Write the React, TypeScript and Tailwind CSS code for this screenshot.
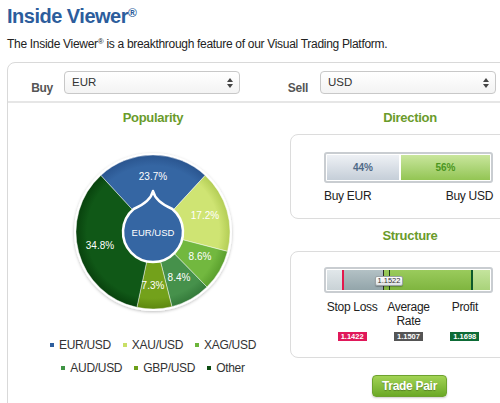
import React from "react"

type Slice = { label: string; pct: number; color: string; dark: string; lx: number; ly: number }

const slices: Slice[] = [
  { label: "EUR/USD", pct: 23.7, color: "#3566a3", dark: "#2a558f", lx: 0, ly: -56 },
  { label: "XAU/USD", pct: 17.2, color: "#cfe473", dark: "#b3cd55", lx: 52, ly: -17 },
  { label: "XAG/USD", pct: 8.6, color: "#72b83f", dark: "#5a9f2d", lx: 47, ly: 24 },
  { label: "AUD/USD", pct: 8.4, color: "#46914b", dark: "#347a3a", lx: 26, ly: 45 },
  { label: "GBP/USD", pct: 7.3, color: "#73a11b", dark: "#5d880f", lx: 0, ly: 53 },
  { label: "Other", pct: 34.8, color: "#105817", dark: "#08420d", lx: -53, ly: 13 },
]

const legend = [
  [
    { label: "EUR/USD", color: "#2f5f9e" },
    { label: "XAU/USD", color: "#c8df66" },
    { label: "XAG/USD", color: "#6cb53a" },
  ],
  [
    { label: "AUD/USD", color: "#3f9444" },
    { label: "GBP/USD", color: "#6c9f18" },
    { label: "Other", color: "#0d4d12" },
  ],
]

function pt(cx: number, cy: number, r: number, deg: number) {
  const a = (deg * Math.PI) / 180
  return [cx + r * Math.sin(a), cy - r * Math.cos(a)]
}

function PieChart() {
  const cx = 85
  const cy = 85
  const r = 77
  let start = -(23.7 * 3.6) / 2
  const paths = slices.map((s, i) => {
    const sweep = s.pct * 3.6
    const [x1, y1] = pt(cx, cy, r, start)
    const [x2, y2] = pt(cx, cy, r, start + sweep)
    const large = sweep > 180 ? 1 : 0
    const d = `M ${cx} ${cy} L ${x1} ${y1} A ${r} ${r} 0 ${large} 1 ${x2} ${y2} Z`
    start += sweep
    return <path key={i} d={d} fill={`url(#g${i})`} stroke="rgba(255,255,255,0.55)" strokeWidth="0.8" />
  })

  return (
    <svg width="170" height="170" viewBox="0 0 170 170" className="block">
      <defs>
        {slices.map((s, i) => (
          <radialGradient key={i} id={`g${i}`} gradientUnits="userSpaceOnUse" cx="85" cy="85" r="77">
            <stop offset="0" stopColor={s.color} />
            <stop offset="0.86" stopColor={s.color} />
            <stop offset="1" stopColor={s.dark} />
          </radialGradient>
        ))}
        <filter id="sh" x="-10%" y="-10%" width="120%" height="120%">
          <feDropShadow dx="0" dy="1" stdDeviation="1.5" floodColor="#000" floodOpacity="0.25" />
        </filter>
      </defs>
      <circle cx={cx} cy={cy} r="79" fill="#fff" filter="url(#sh)" />
      {paths}
      <path
        d="M 85 44 C 87 53, 95 58, 104.3 62 A 30 30 0 1 1 65.7 62 C 75 58, 83 53, 85 44 Z"
        fill="#3566a3"
        stroke="#fff"
        strokeWidth="2.5"
        strokeLinejoin="round"
      />
      <text x="85" y="85" fill="#fff" fontSize="9.5" textAnchor="middle" dominantBaseline="central" fontFamily="Liberation Sans, Arial, sans-serif">
        EUR/USD
      </text>
      {slices.map((s, i) => (
        <text
          key={i}
          x={cx + s.lx}
          y={cy + s.ly}
          fill="#fff"
          fontSize="10"
          textAnchor="middle"
          dominantBaseline="central"
          fontFamily="Liberation Sans, Arial, sans-serif"
        >
          {s.pct.toFixed(1)}%
        </text>
      ))}
    </svg>
  )
}

function SelectBox({ value }: { value: string }) {
  return (
    <div className="w-[176px] h-[23px] rounded-[4px] border border-[#c8c8c8] bg-linear-to-b from-white to-[#f3f3f3] flex items-center justify-between pl-[7px] pr-[6px] text-[11.5px] text-[#333]">
      <span>{value}</span>
      <svg width="6" height="10" viewBox="0 0 6 10">
        <path d="M3 0 L6 4 L0 4 Z" fill="#444" />
        <path d="M3 10 L6 6 L0 6 Z" fill="#444" />
      </svg>
    </div>
  )
}

export default function App() {
  return (
    <div className="w-[500px] h-[403px] overflow-hidden bg-white text-[#333] font-['Liberation_Sans',Arial,sans-serif]">
      <div className="pl-[7px] pt-[3px]">
        <h1 className="text-[20px] leading-[26px] font-bold tracking-[-0.5px] text-[#2c5d9c]">
          Inside Viewer<sup className="text-[12px] tracking-normal">®</sup>
        </h1>
        <p className="mt-[7px] text-[12px] leading-[16px] tracking-[-0.3px] text-[#222]">
          The Inside Viewer<sup className="text-[8px]">®</sup> is a breakthrough feature of our Visual Trading Platform.
        </p>

        <div className="mt-[10px] w-[540px] h-[360px] border border-[#d9d9d9] rounded-tl-[8px]">
          <div className="h-[40px] border-b-2 border-[#e6e6e6] flex items-start pt-[8px]">
            <span className="w-[45px] text-right mt-[8px] text-[12px] font-bold tracking-[-0.3px] text-[#555]">Buy</span>
            <div className="ml-[11px]">
              <SelectBox value="EUR" />
            </div>
            <span className="w-[68px] text-right mt-[8px] text-[12px] font-bold tracking-[-0.3px] text-[#555]">Sell</span>
            <div className="ml-[12px]">
              <SelectBox value="USD" />
            </div>
          </div>

          <div className="flex">
            {/* popularity */}
            <div className="w-[272px] pl-[18px] flex flex-col items-center">
              <h2 className="mt-[7px] text-[13px] leading-[16px] font-bold tracking-[-0.3px] text-[#6a9b2b]">Popularity</h2>
              <div className="mt-[21px]">
                <PieChart />
              </div>
              <div className="mt-[21px] flex flex-col items-center gap-[9px] text-[12px] leading-[14px] tracking-[-0.3px] text-[#333]">
                {legend.map((row, ri) => (
                  <div key={ri} className="flex items-center gap-[12px]">
                    {row.map((l) => (
                      <div key={l.label} className="flex items-center gap-[5px]">
                        <span className="w-[4px] h-[4px]" style={{ backgroundColor: l.color }} />
                        <span>{l.label}</span>
                      </div>
                    ))}
                  </div>
                ))}
              </div>
            </div>

            {/* direction + structure */}
            <div className="w-[260px] flex flex-col items-center">
              <h2 className="mt-[7px] text-[13px] leading-[16px] font-bold tracking-[-0.3px] text-[#6a9b2b]">Direction</h2>
              <div className="mt-[8px] w-[240px] h-[85px] border border-[#dcdcdc] rounded-[8px] pt-[17px] pl-[33px]">
                <div className="w-[169px] h-[31px] rounded-[3px] border-2 border-[#c9cdd1] bg-white p-[1px] flex gap-[2px]">
                  <div className="w-[72px] bg-linear-to-b from-[#eef1f5] to-[#c5ced8] flex items-center justify-center text-[10px] font-bold text-[#4f6a88]">
                    44%
                  </div>
                  <div className="flex-1 bg-linear-to-b from-[#c9e69c] to-[#93c553] flex items-center justify-center text-[10px] font-bold text-[#4b961f]">
                    56%
                  </div>
                </div>
                <div className="mt-[6px] w-[169px] flex justify-between text-[12px] leading-[14px] tracking-[-0.3px] text-[#222]">
                  <span>Buy EUR</span>
                  <span>Buy USD</span>
                </div>
              </div>

              <h2 className="mt-[9px] text-[13px] leading-[16px] font-bold tracking-[-0.3px] text-[#6a9b2b]">Structure</h2>
              <div className="mt-[7px] w-[240px] h-[107px] border border-[#dcdcdc] rounded-[8px] pt-[15px] pl-[33px]">
                <div className="relative w-[169px] h-[26px] rounded-[3px] border-2 border-[#c9cdd1] bg-white p-[1px]">
                  <div className="flex h-full">
                    <div className="w-[15px] bg-linear-to-b from-[#e1e7ea] to-[#c9d2d6]" />
                    <div className="w-[2px] bg-[#e3174c]" />
                    <div className="w-[39px] bg-linear-to-b from-[#b3c1c5] to-[#93a5aa]" />
                    <div className="w-[1px] bg-[#2b2b2b]" />
                    <div className="w-[5px] bg-linear-to-b from-[#9acb5c] to-[#7fb53f]" />
                    <div className="w-[1px] bg-[#1d3a1d]" />
                    <div className="w-[81px] bg-linear-to-b from-[#9acb5c] to-[#7fb53f]" />
                    <div className="w-[2px] bg-[#0c5a2b]" />
                    <div className="flex-1 bg-linear-to-b from-[#c4e49d] to-[#a9d37a]" />
                  </div>
                  <div className="absolute left-[49px] top-[7px] w-[28px] h-[10px] rounded-[2px] border border-[#9aa3a6] bg-linear-to-b from-white to-[#dfe3e5] flex items-center justify-center text-[7.5px] leading-none text-[#333] shadow-[0_1px_1px_rgba(0,0,0,0.25)]">
                    1.1522
                  </div>
                </div>
                <div className="mt-[7px] w-[169px] grid grid-cols-3 text-[12px] leading-[14px] tracking-[-0.3px] text-[#222] text-center">
                  {[
                    { l: ["Stop Loss"], v: "1.1422", c: "bg-[#e0185a]" },
                    { l: ["Average", "Rate"], v: "1.1507", c: "bg-[#555555]" },
                    { l: ["Profit"], v: "1.1698", c: "bg-[#0d6b36]" },
                  ].map((it) => (
                    <div key={it.v} className="flex flex-col items-center">
                      <div className="h-[28px]">
                        {it.l.map((t) => (
                          <div key={t}>{t}</div>
                        ))}
                      </div>
                      <div className={`mt-[4px] w-[29px] h-[9px] flex items-center justify-center text-[7.5px] leading-none font-bold tracking-normal text-white ${it.c}`}>
                        {it.v}
                      </div>
                    </div>
                  ))}
                </div>
              </div>

              <button className="mt-[17px] ml-[-1px] w-[75px] h-[22px] rounded-[4px] border border-[#6da22e] bg-linear-to-b from-[#a2d354] to-[#6ba925] text-[12px] font-bold tracking-[-0.3px] text-white [text-shadow:0_1px_1px_rgba(0,0,0,0.3)] shadow-[0_1px_2px_rgba(0,0,0,0.2)]">
                Trade Pair
              </button>
            </div>
          </div>
        </div>
      </div>
    </div>
  )
}
